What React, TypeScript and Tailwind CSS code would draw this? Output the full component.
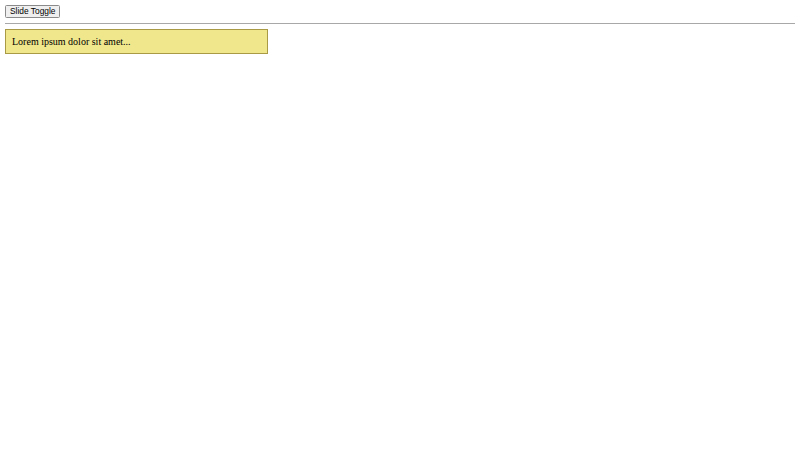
import { useState } from 'react';

const App = () => {
  const [open, setOpen] = useState(true);

  return (
    <div className="min-h-[450px] bg-white p-[5px] font-['Liberation_Serif',serif] text-black">
      <button
        onClick={() => setOpen(!open)}
        className="block h-[13px] rounded-[1.5px] border border-[#8a8a8a] bg-[#efefef] px-[4px] font-['Liberation_Sans',Arial,sans-serif] text-[8.4px] leading-[11px] text-black"
      >
        Slide Toggle
      </button>
      <hr className="mt-[5px] border-0 border-t border-[#a8a8a8]" />
      {open && (
        <div className="mt-[5px] flex h-[25px] w-[263px] items-center border border-[#a99a45] bg-[#f0e68c] px-[6px] text-[10px] leading-[12px]">
          Lorem ipsum dolor sit amet...
        </div>
      )}
    </div>
  );
};

export default App;
